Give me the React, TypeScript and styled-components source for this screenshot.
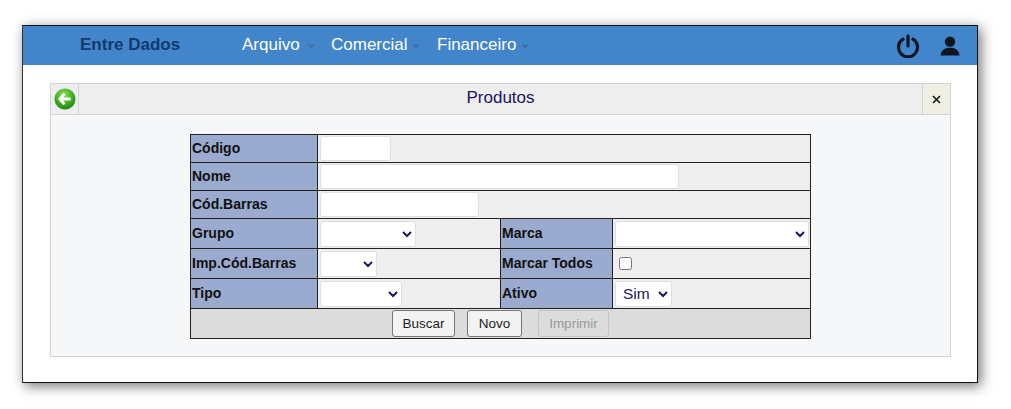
import React from "react";
import styled, { createGlobalStyle } from "styled-components";

const GlobalStyle = createGlobalStyle`
  html, body {
    margin: 0;
    padding: 0;
    background: #fff;
    font-family: "Liberation Sans", Arial, sans-serif;
  }
`;

const Page = styled.div`
  width: 1011px;
  height: 409px;
  padding: 25px 33px 0 22px;
  box-sizing: border-box;
  overflow: hidden;
`;

const Window = styled.div`
  height: 358px;
  box-sizing: border-box;
  background: #fff;
  border: 1px solid #111;
  border-left-color: #333;
  box-shadow: 3px 3px 12px rgba(0, 0, 0, 0.55);
`;

const TopBar = styled.header`
  height: 39px;
  background: #4285ca;
  display: flex;
  align-items: center;
  padding-left: 57px;
  padding-right: 17px;
`;

const Brand = styled.div`
  width: 162px;
  margin-top: -2px;
  font-size: 17px;
  font-weight: bold;
  color: #12386e;
`;

const Menu = styled.nav`
  display: flex;
  flex: 1;
  margin-top: -2px;
`;

const MenuItem = styled.div<{ $width: number; $gap: number }>`
  width: ${(p) => p.$width}px;
  display: flex;
  align-items: center;
  gap: ${(p) => p.$gap}px;
  font-size: 17px;
  color: #fff;
`;

const Caret = styled.svg`
  width: 8px;
  height: 6px;
  margin-top: 3px;
  fill: none;
  stroke: #41689a;
  stroke-width: 1.6;
`;

const TopIcons = styled.div`
  display: flex;
  align-items: center;
  gap: 20px;
`;

const Content = styled.main`
  padding: 18px 26px 0 27px;
`;

const Panel = styled.section`
  height: 274px;
  box-sizing: border-box;
  background: #f6f7f9;
  border: 1px solid #d3d3d3;
`;

const PanelHead = styled.div`
  height: 30px;
  display: flex;
  background: #eeeeee;
  border-bottom: 1px solid #d3d3d3;
`;

const BackCell = styled.div`
  width: 27px;
  display: flex;
  align-items: center;
  justify-content: center;
  border-right: 1px solid #d3d3d3;
`;

const PanelTitle = styled.div`
  flex: 1;
  display: flex;
  align-items: center;
  justify-content: center;
  font-size: 17px;
  padding-bottom: 2px;
  color: #1b1464;
`;

const CloseCell = styled.div`
  width: 27px;
  display: flex;
  align-items: center;
  justify-content: center;
  background: #eeeee2;
  border-left: 1px solid #d3d3d3;
`;

const FormTable = styled.table`
  width: 621px;
  margin: 19px 0 0 139px;
  border-collapse: collapse;
  table-layout: fixed;
  border: 1px solid #222;
`;

const Row = styled.tr<{ $height: number }>`
  height: ${(p) => p.$height}px;
`;

const Label = styled.td`
  padding: 0 0 1px 1px;
  background: #9aabcf;
  border: 1px solid #222;
  font-size: 14px;
  font-weight: bold;
  color: #111;
`;

const Field = styled.td`
  padding: 0 0 0 2px;
  background: #eeeeee;
  border: 1px solid #222;
  font-size: 0;
  vertical-align: middle;
`;

const TextInput = styled.input<{ $width: number }>`
  width: ${(p) => p.$width}px;
  height: 25px;
  box-sizing: border-box;
  padding: 0 4px;
  background: #fff;
  border: 1px solid #dedede;
  border-radius: 3px;
  outline: none;
`;

const Select = styled.select<{ $width: number }>`
  width: ${(p) => p.$width}px;
  height: 26px;
  box-sizing: border-box;
  padding: 0 3px;
  background: #fff;
  border: 1px solid #dedede;
  border-radius: 3px;
  font-family: inherit;
  font-size: 15.5px;
  color: #1b1464;
  outline: none;
`;

const Check = styled.input`
  width: 13px;
  height: 13px;
  margin: 0 0 0 4px;
  vertical-align: middle;
`;

const ButtonCell = styled.td`
  padding: 0;
  background: #dcdcdc;
  border: 1px solid #222;
`;

const Buttons = styled.div`
  display: flex;
  align-items: center;
  padding-left: 201px;
`;

const Button = styled.button<{ $width: number; $gap: number }>`
  width: ${(p) => p.$width}px;
  height: 27px;
  margin-right: ${(p) => p.$gap}px;
  padding: 0;
  background: #f3f3f3;
  border: 1px solid #767676;
  border-radius: 3px;
  font-family: inherit;
  font-size: 13.5px;
  color: #222;

  &:disabled {
    background: #dcdcdc;
    border-color: #c4c4c4;
    color: #999;
  }
`;

const BackIcon = () => (
  <svg width="22" height="22" viewBox="0 0 23 23">
    <defs>
      <radialGradient id="green" cx="45%" cy="30%" r="75%">
        <stop offset="0%" stopColor="#8fe05a" />
        <stop offset="55%" stopColor="#3fae1f" />
        <stop offset="100%" stopColor="#1d7f10" />
      </radialGradient>
    </defs>
    <circle cx="11.5" cy="11.5" r="11" fill="url(#green)" />
    <path d="M11 6 L6 11.5 L11 17 M6.5 11.5 L17.5 11.5" fill="none" stroke="#fff" strokeWidth="3" />
  </svg>
);

const PowerIcon = () => (
  <svg width="24" height="24" viewBox="0 0 24 24" fill="none" stroke="#0d1520" strokeWidth="3.2" strokeLinecap="round">
    <path d="M7 5.2 A9.5 9.5 0 1 0 17 5.2" />
    <path d="M12 1.8 L12 12" />
  </svg>
);

const UserIcon = () => (
  <svg width="20" height="20" viewBox="0 0 20 20" fill="#0d1520">
    <circle cx="10" cy="5.6" r="5.2" />
    <path d="M0.5 19.5 C1 14.5 4.5 12.8 7 11.8 L13 11.8 C15.5 12.8 19 14.5 19.5 19.5 Z" />
  </svg>
);

const CloseIcon = () => (
  <svg width="9" height="9" viewBox="0 0 9 9" stroke="#111" strokeWidth="1.5">
    <path d="M1 1 L8 8 M8 1 L1 8" />
  </svg>
);

const MenuCaret = () => (
  <Caret viewBox="0 0 8 6">
    <path d="M1.5 1.5 L4 4 L6.5 1.5" />
  </Caret>
);

export default function App() {
  return (
    <Page>
      <GlobalStyle />
      <Window>
        <TopBar>
          <Brand>Entre Dados</Brand>
          <Menu>
            <MenuItem $width={89} $gap={7}>Arquivo <MenuCaret /></MenuItem>
            <MenuItem $width={106} $gap={4}>Comercial <MenuCaret /></MenuItem>
            <MenuItem $width={100} $gap={5}>Financeiro <MenuCaret /></MenuItem>
          </Menu>
          <TopIcons>
            <PowerIcon />
            <UserIcon />
          </TopIcons>
        </TopBar>
        <Content>
          <Panel>
            <PanelHead>
              <BackCell><BackIcon /></BackCell>
              <PanelTitle>Produtos</PanelTitle>
              <CloseCell><CloseIcon /></CloseCell>
            </PanelHead>
            <FormTable>
              <colgroup>
                <col style={{ width: 127 }} />
                <col style={{ width: 183 }} />
                <col style={{ width: 112 }} />
                <col />
              </colgroup>
              <tbody>
                <Row $height={28}>
                  <Label>Código</Label>
                  <Field colSpan={3}><TextInput $width={71} /></Field>
                </Row>
                <Row $height={28}>
                  <Label>Nome</Label>
                  <Field colSpan={3}><TextInput $width={359} /></Field>
                </Row>
                <Row $height={28}>
                  <Label>Cód.Barras</Label>
                  <Field colSpan={3}><TextInput $width={159} /></Field>
                </Row>
                <Row $height={30}>
                  <Label>Grupo</Label>
                  <Field><Select $width={96}><option></option></Select></Field>
                  <Label>Marca</Label>
                  <Field><Select $width={194}><option></option></Select></Field>
                </Row>
                <Row $height={30}>
                  <Label>Imp.Cód.Barras</Label>
                  <Field><Select $width={57}><option></option></Select></Field>
                  <Label>Marcar Todos</Label>
                  <Field><Check type="checkbox" /></Field>
                </Row>
                <Row $height={30}>
                  <Label>Tipo</Label>
                  <Field><Select $width={82}><option></option></Select></Field>
                  <Label>Ativo</Label>
                  <Field><Select $width={57}><option>Sim</option></Select></Field>
                </Row>
                <Row $height={30}>
                  <ButtonCell colSpan={4}>
                    <Buttons>
                      <Button $width={63} $gap={12}>Buscar</Button>
                      <Button $width={55} $gap={16}>Novo</Button>
                      <Button $width={71} $gap={0} disabled>Imprimir</Button>
                    </Buttons>
                  </ButtonCell>
                </Row>
              </tbody>
            </FormTable>
          </Panel>
        </Content>
      </Window>
    </Page>
  );
}
